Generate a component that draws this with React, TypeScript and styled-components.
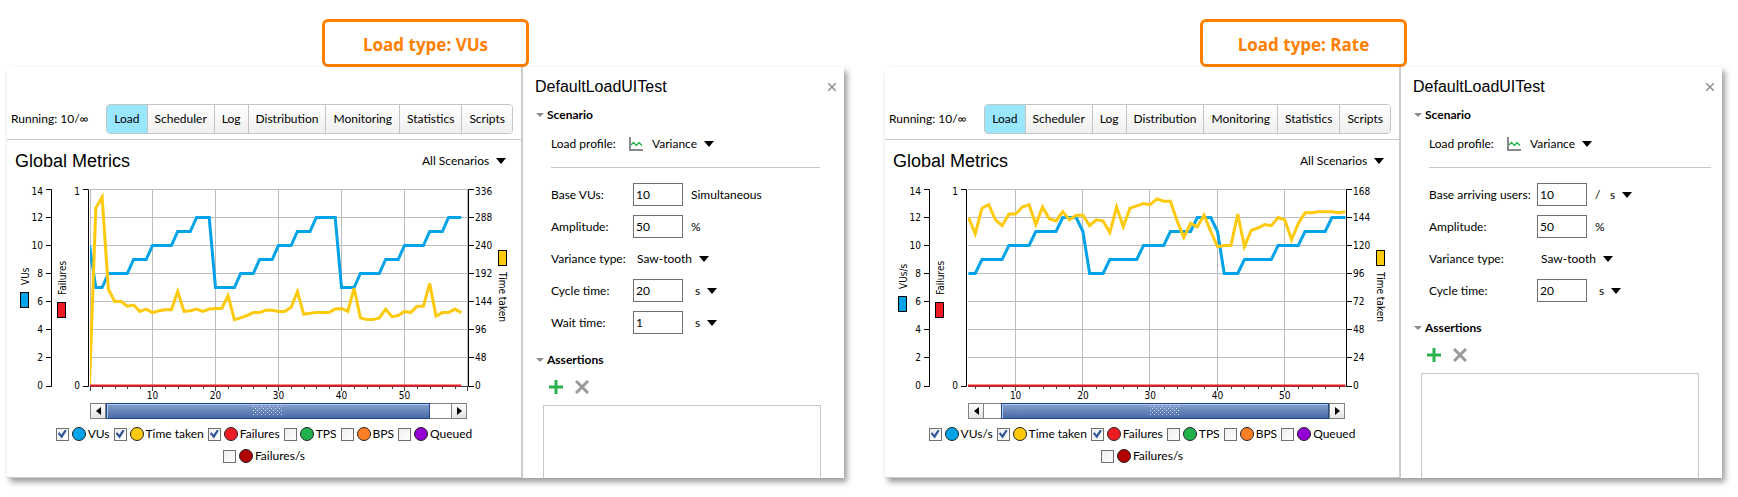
import React, { useId } from 'react';
import styled, { createGlobalStyle } from 'styled-components';

const UI_FONT = 'Lato, "Open Sans", sans-serif';
const BADGE_FONT = '"Open Sans", "Noto Sans", sans-serif';
const CHART_FONT = '"DejaVu Sans Condensed", "DejaVu Sans", sans-serif';
const TITLE_FONT = '"Liberation Sans", Arial, sans-serif';

const GlobalStyle = createGlobalStyle`
  *, *::before, *::after { box-sizing: border-box; }
  body { margin: 0; background: #fff; color: #000; font: 12px/16px ${UI_FONT}; }
  button, input, select { font: inherit; color: inherit; margin: 0; }
`;

/* ---------- page ---------- */

const Page = styled.main`
  display: grid;
  grid-template-columns: minmax(0, 1fr) minmax(0, 1fr);
  column-gap: 41px;
  padding: 19px 16px 16px 7px;
`;

const Example = styled.section`
  display: flex;
  flex-direction: column;
  align-items: center;
`;

const Badge = styled.h2`
  display: flex;
  align-items: center;
  justify-content: center;
  width: 207px;
  height: 48px;
  margin: 0;
  padding-top: 3px;
  border: 3px solid #ff8000;
  border-radius: 6px;
  background: #fff;
  color: #ff8000;
  font: 700 17px/24px ${BADGE_FONT};
`;

const Window = styled.div`
  display: grid;
  grid-template-columns: minmax(0, 1fr) 323px;
  align-self: stretch;
  background: #fff;
  box-shadow: 3px 4px 6px rgba(0, 0, 0, 0.4);
`;

/* ---------- metrics pane ---------- */

const MetricsPane = styled.div`
  display: flex;
  flex-direction: column;
  padding-bottom: 10px;
  border-bottom: 1px solid #ccc;
`;

const Toolbar = styled.header`
  display: flex;
  align-items: flex-end;
  justify-content: space-between;
  height: 73px;
  padding: 0 8px 5px 4px;
  border-bottom: 1px solid #c8c8c8;
`;

const RunState = styled.span`
  line-height: 30px;
`;

const Tabs = styled.nav`
  display: flex;
  height: 30px;
  border: 1px solid #c4c4c4;
  border-radius: 4px;
  overflow: hidden;
`;

const Tab = styled.button<{ $active?: boolean }>`
  padding: 0 7px;
  border: 0;
  border-left: 1px solid #c4c4c4;
  background: ${(p) => (p.$active ? '#99e6ff' : 'linear-gradient(#fff, #efefef)')};
  &:first-child { border-left: 0; }
`;

const TitleRow = styled.div`
  display: flex;
  align-items: center;
  justify-content: space-between;
  height: 42px;
  padding: 0 15px 0 8px;
`;

const PaneTitle = styled.h3`
  margin: 0;
  font: 400 18px/24px ${TITLE_FONT};
`;

const ChartSvg = styled.svg`
  display: block;
  width: 100%;
  height: auto;
  font: 10px ${CHART_FONT};
`;

const ScrollBar = styled.div`
  display: flex;
  height: 16px;
  margin: 1px 54px 0 83px;
  border: 1px solid #808080;
  background: #fff;
`;

const ScrollArrow = styled.button`
  display: flex;
  align-items: center;
  justify-content: center;
  flex: 0 0 14px;
  padding: 0;
  border: 0;
  background: linear-gradient(#fff, #e4e4e4);
`;

const ScrollTrack = styled.div`
  flex: 1;
  display: flex;
  margin: -1px 0;
  border: 1px solid #808080;
`;

const ScrollThumb = styled.div`
  display: flex;
  align-items: center;
  justify-content: center;
  margin: -1px;
  border: 1px solid #24468a;
  box-shadow: inset 1px 1px 0 #a9cdf5;
  background: linear-gradient(#88a0cd, #4a6ba6);
`;

const Legend = styled.div`
  display: flex;
  flex-wrap: wrap;
  justify-content: center;
  column-gap: 4px;
  margin-top: 4px;
  padding: 0 20px;
`;

const LegendItem = styled.label`
  display: flex;
  align-items: center;
  height: 22px;
`;

const CheckBox = styled.input`
  appearance: none;
  display: grid;
  place-items: center;
  width: 13px;
  height: 13px;
  margin-right: 3px;
  border: 1px solid #707070;
  background: linear-gradient(135deg, #eee, #fff);
  &:checked::after {
    content: '';
    width: 9px;
    height: 9px;
    background: #2f5496;
    clip-path: polygon(0 45%, 22% 30%, 40% 58%, 82% 0, 100% 14%, 46% 100%);
  }
`;

const Dot = styled.span<{ $color: string }>`
  width: 14px;
  height: 14px;
  margin-right: 2px;
  border: 1px solid #222;
  border-radius: 50%;
  background: ${(p) => p.$color};
`;

/* ---------- side pane ---------- */

const SidePane = styled.aside`
  display: flex;
  flex-direction: column;
  border-left: 2px solid #ccc;
`;

const SideHeader = styled.header`
  display: flex;
  align-items: center;
  justify-content: space-between;
  height: 40px;
  padding: 0 8px 0 12px;
`;

const SideTitle = styled.h3`
  margin: 0;
  font: 400 16px/24px ${TITLE_FONT};
`;

const IconButton = styled.button`
  display: flex;
  padding: 0;
  border: 0;
  background: none;
`;

const SectionToggle = styled.button`
  display: flex;
  align-items: center;
  gap: 3px;
  height: 16px;
  padding: 0;
  margin-left: 13px;
  border: 0;
  background: none;
  font-weight: 700;
`;

const ProfileRow = styled.div`
  display: flex;
  align-items: center;
  height: 20px;
  margin: 11px 0 13px 28px;
  svg { flex: none; }
`;

const ProfileLabel = styled.label`
  width: 78px;
`;

const ProfileChoice = styled.div`
  margin-left: 9px;
`;

const Divider = styled.hr<{ $wide?: boolean }>`
  width: auto;
  height: 1px;
  margin: 0 ${(p) => (p.$wide ? 11 : 24)}px 0 28px;
  border: 0;
  background: #c8c8c8;
`;

const Fields = styled.div<{ $wide?: boolean }>`
  display: grid;
  grid-template-columns: ${(p) => (p.$wide ? 108 : 82)}px 1fr;
  grid-auto-rows: 23px;
  row-gap: 9px;
  align-items: center;
  margin: 15px 0 18px 28px;
  white-space: nowrap;
`;

const FieldValue = styled.div`
  display: flex;
  align-items: center;
`;

const NumberBox = styled.input`
  width: 50px;
  height: 23px;
  margin-right: 8px;
  padding: 0 2px;
  border: 1px solid #707070;
  background: #fff;
`;

const SelectWrap = styled.span<{ $indent?: boolean }>`
  display: inline-grid;
  align-items: center;
  margin-left: ${(p) => (p.$indent ? 4 : 0)}px;
  > * { grid-area: 1 / 1; }
  svg { justify-self: end; pointer-events: none; }
`;

const Select = styled.select`
  appearance: none;
  height: 20px;
  padding: 0 16px 0 0;
  border: 0;
  background: none;
`;

const Slash = styled.span`
  width: 11px;
`;

const AssertionTools = styled.div`
  display: flex;
  gap: 12px;
  margin: 12px 0 11px 26px;
`;

const AssertionList = styled.div`
  flex: 1;
  margin: 0 23px 0 20px;
  border: 1px solid #c8c8c8;
  border-bottom: 0;
`;

/* ---------- small drawings ---------- */

const DownArrow = () => (
  <svg width="10" height="6" viewBox="0 0 10 6" aria-hidden="true">
    <path d="M0 0H10L5 6Z" />
  </svg>
);

const SectionArrow = () => (
  <svg width="8" height="4" viewBox="0 0 8 4" aria-hidden="true">
    <path d="M0 0H8L4 4Z" fill="#8c8c8c" />
  </svg>
);

const VarianceIcon = () => (
  <svg width="14" height="14" viewBox="0 0 14 14" aria-hidden="true">
    <path d="M1 0V13H14" fill="none" stroke="#8a8a8a" strokeWidth="2" />
    <path d="M2 8L4.5 5.5L7.5 8.5L10 5.5L13 8.5" fill="none" stroke="#2bb24c" strokeWidth="1.5" />
  </svg>
);

const Grip = () => (
  <svg width="30" height="10" aria-hidden="true">
    {Array.from({ length: 5 }, (_, r) =>
      Array.from({ length: 8 }, (_, c) => (
        <rect key={`${r}-${c}`} x={c * 4 + (r % 2) * 2} y={r * 2} width="1" height="1" fill="#d4e2f8" />
      )),
    )}
  </svg>
);

/* ---------- chart ---------- */

type Point = [number, number];

interface ChartData {
  loadName: string;
  start: number;
  pxPerSecond: number;
  originX: number;
  load: Point[];
  timeTaken: number[];
  timeStep: number;
  loadLabelY: number;
}

const PLOT = { left: 83, right: 460, top: 7.5, bottom: 203.5 };

function MetricsChart({ data }: { data: ChartData }) {
  const clip = useId();
  const x = (t: number) => data.originX + (t - data.start) * data.pxPerSecond;
  const y = (v: number) => PLOT.bottom - v * 14;
  const rows = [0, 2, 4, 6, 8, 10, 12, 14];
  const majors = [10, 20, 30, 40, 50];
  const minors = Array.from({ length: 31 }, (_, i) => i * 2).filter(
    (t) => t >= data.start && x(t) <= 461 && t % 10 !== 0,
  );
  const labelY = (v: number) => y(v) + (v === 14 ? 5 : 3);
  const loadPath = data.load.map(([t, v]) => `${x(t)},${y(v)}`).join(' ');
  const timePath = data.timeTaken
    .map((v, i) => `${x(data.start + i)},${y((v * 2) / data.timeStep)}`)
    .join(' ');

  return (
    <ChartSvg viewBox="0 0 514 220" role="img" aria-label="Global metrics chart">
      <clipPath id={clip}>
        <rect x={PLOT.left} y="0" width={PLOT.right - PLOT.left + 1} height="206" />
      </clipPath>

      <g stroke="#bdbdbd">
        {rows.slice(1).map((v) => <path key={v} d={`M${PLOT.left} ${y(v)}H461`} />)}
        {majors.map((t) => <path key={t} d={`M${Math.round(x(t)) - 0.5} 7V204`} />)}
        {data.start === 0 && <path d="M83.5 7V204M460.5 7V204" />}
      </g>

      <g stroke="#000" fill="none">
        <path d={`M${PLOT.left} 204.5H461`} stroke="#444" />
        <path d="M39 7.5H44.5V204.5H39M76 7.5H81.5V204.5H76" />
        <path d="M467 7.5H461.5V204.5H467" />
        {rows.slice(1, -1).map((v) => <path key={v} d={`M39 ${y(v)}H44M462 ${y(v)}H467`} />)}
        {majors.map((t) => <path key={t} d={`M${Math.round(x(t)) - 0.5} 205V209`} stroke="#444" />)}
        {minors.map((t) => <path key={t} d={`M${Math.round(x(t)) + 0.5} 205V207`} stroke="#444" />)}
        {data.start === 0 && <path d="M83.5 205V209M460.5 205V209" stroke="#444" />}
      </g>

      <g clipPath={`url(#${clip})`} fill="none" strokeWidth="3">
        <polyline points={loadPath} stroke="#00a2e8" />
        <polyline points={timePath} stroke="#ffc90e" />
        <path d={`M83 203.5H${x(59)}`} stroke="#ed1c24" strokeWidth="2" />
      </g>

      <g textAnchor="end">
        {rows.map((v) => <text key={v} x="36" y={labelY(v)}>{v}</text>)}
        <text x="73" y={labelY(14)}>1</text>
        <text x="73" y={labelY(0)}>0</text>
      </g>
      <g>
        {rows.map((v) => (
          <text key={v} x="468" y={labelY(v)}>{(v / 2) * data.timeStep}</text>
        ))}
      </g>
      <g textAnchor="middle">
        {majors.map((t) => <text key={t} x={x(t)} y="217">{t}</text>)}
      </g>

      <g stroke="#000">
        <rect x="13.5" y={data.loadLabelY + 7.5} width="8" height="15" fill="#00a2e8" />
        <rect x="50.5" y="120.5" width="8" height="15" fill="#ed1c24" />
        <rect x="491.5" y="68.5" width="8" height="15" fill="#ffc90e" />
      </g>
      <g>
        <text transform={`translate(22 ${data.loadLabelY}) rotate(-90)`}>{data.loadName}</text>
        <text transform="translate(59 113) rotate(-90)">Failures</text>
        <text transform="translate(492 90) rotate(90)">Time taken</text>
      </g>
    </ChartSvg>
  );
}

/* ---------- composed parts ---------- */

function Choice({ label, id, value, indent }: { label?: string; id?: string; value: string; indent?: boolean }) {
  return (
    <SelectWrap $indent={indent}>
      <Select id={id} aria-label={label} defaultValue={value}>
        <option>{value}</option>
      </Select>
      <DownArrow />
    </SelectWrap>
  );
}

interface Field {
  label: string;
  value?: string;
  choice?: string;
  suffix?: string;
  perUnit?: boolean;
  unit?: string;
}

function FieldRow({ field }: { field: Field }) {
  const id = useId();
  return (
    <>
      <label htmlFor={id}>{field.label}</label>
      <FieldValue>
        {field.value && <NumberBox id={id} defaultValue={field.value} />}
        {field.choice && <Choice id={id} value={field.choice} indent />}
        {field.suffix && <span>{field.suffix}</span>}
        {field.perUnit && <Slash>/</Slash>}
        {field.unit && <Choice label={`${field.label} unit`} value={field.unit} indent />}
      </FieldValue>
    </>
  );
}

const TABS = ['Load', 'Scheduler', 'Log', 'Distribution', 'Monitoring', 'Statistics', 'Scripts'];

interface PanelProps {
  badge: string;
  chart: ChartData;
  thumb: [number, number];
  fields: Field[];
  wide?: boolean;
}

function LoadTestWindow({ badge, chart, thumb, fields, wide }: PanelProps) {
  const profileId = useId();
  const series: [string, string, boolean][] = [
    [chart.loadName, '#00a2e8', true],
    ['Time taken', '#ffc90e', true],
    ['Failures', '#ed1c24', true],
    ['TPS', '#22b14c', false],
    ['BPS', '#ff7f27', false],
    ['Queued', '#9400d3', false],
    ['Failures/s', '#b00000', false],
  ];

  return (
    <Example>
      <Badge>{badge}</Badge>
      <Window>
        <MetricsPane>
          <Toolbar>
            <RunState>Running: 10/∞</RunState>
            <Tabs>
              {TABS.map((t) => <Tab key={t} type="button" $active={t === 'Load'}>{t}</Tab>)}
            </Tabs>
          </Toolbar>
          <TitleRow>
            <PaneTitle>Global Metrics</PaneTitle>
            <Choice label="Scenario filter" value="All Scenarios" />
          </TitleRow>
          <MetricsChart data={chart} />
          <ScrollBar>
            <ScrollArrow type="button" aria-label="Scroll left">
              <svg width="5" height="8"><path d="M5 0V8L0 4Z" /></svg>
            </ScrollArrow>
            <ScrollTrack>
              <ScrollThumb style={{ marginLeft: `${thumb[0]}%`, width: `${thumb[1]}%` }}>
                <Grip />
              </ScrollThumb>
            </ScrollTrack>
            <ScrollArrow type="button" aria-label="Scroll right">
              <svg width="5" height="8"><path d="M0 0V8L5 4Z" /></svg>
            </ScrollArrow>
          </ScrollBar>
          <Legend>
            {series.map(([name, color, on]) => (
              <LegendItem key={name}>
                <CheckBox type="checkbox" defaultChecked={on} />
                <Dot $color={color} />
                {name}
              </LegendItem>
            ))}
          </Legend>
        </MetricsPane>

        <SidePane>
          <SideHeader>
            <SideTitle>DefaultLoadUITest</SideTitle>
            <IconButton type="button" aria-label="Close">
              <svg width="8" height="8" stroke="#8a8a8a" strokeWidth="1.4"><path d="M0 0L8 8M8 0L0 8" /></svg>
            </IconButton>
          </SideHeader>
          <SectionToggle type="button"><SectionArrow />Scenario</SectionToggle>
          <ProfileRow>
            <ProfileLabel htmlFor={profileId}>Load profile:</ProfileLabel>
            <VarianceIcon />
            <ProfileChoice><Choice id={profileId} value="Variance" /></ProfileChoice>
          </ProfileRow>
          <Divider $wide={wide} />
          <Fields $wide={wide}>
            {fields.map((f) => <FieldRow key={f.label} field={f} />)}
          </Fields>
          <SectionToggle type="button"><SectionArrow />Assertions</SectionToggle>
          <AssertionTools>
            <IconButton type="button" aria-label="Add assertion">
              <svg width="14" height="14" stroke="#2bb24c" strokeWidth="3"><path d="M7 0V14M0 7H14" /></svg>
            </IconButton>
            <IconButton type="button" aria-label="Remove assertion">
              <svg width="14" height="14" stroke="#9a9a9a" strokeWidth="3"><path d="M1 1L13 13M13 1L1 13" /></svg>
            </IconButton>
          </AssertionTools>
          <AssertionList />
        </SidePane>
      </Window>
    </Example>
  );
}

/* ---------- data ---------- */

const vusChart: ChartData = {
  loadName: 'VUs',
  start: 0,
  pxPerSecond: 6.3,
  originX: 82.5,
  timeStep: 48,
  loadLabelY: 103,
  load: [
    [0, 10], [1, 7], [2, 7], [3, 8], [6, 8], [7, 9], [9, 9], [10, 10], [13, 10], [14, 11], [16, 11],
    [17, 12], [19, 12], [20, 7], [23, 7], [24, 8], [26, 8], [27, 9], [29, 9], [30, 10], [32, 10],
    [33, 11], [35, 11], [36, 12], [39, 12], [40, 7], [42, 7], [43, 8], [46, 8], [47, 9], [49, 9],
    [50, 10], [53, 10], [54, 11], [56, 11], [57, 12], [59, 12],
  ],
  timeTaken: [
    0, 304, 323, 165, 144, 144, 136, 138, 127, 131, 125, 128, 130, 130, 161, 127, 128, 131, 127, 131,
    132, 132, 154, 113, 116, 120, 125, 125, 129, 129, 127, 127, 134, 161, 122, 124, 125, 125, 125, 131,
    132, 127, 167, 116, 113, 113, 116, 131, 118, 120, 127, 125, 136, 136, 175, 119, 125, 125, 131, 125,
  ],
};

const rateChart: ChartData = {
  loadName: 'VUs/s',
  start: 3,
  pxPerSecond: 6.73,
  originX: 83.5,
  timeStep: 24,
  loadLabelY: 107,
  load: [
    [3, 8], [4, 8], [5, 9], [8, 9], [9, 10], [12, 10], [13, 11], [16, 11], [17, 12], [19, 12], [20, 11],
    [21, 8], [23, 8], [24, 9], [28, 9], [29, 10], [32, 10], [33, 11], [36, 11], [37, 12], [39, 12],
    [40, 11], [41, 8], [43, 8], [44, 9], [48, 9], [49, 10], [52, 10], [53, 11], [56, 11], [57, 12], [59, 12],
  ],
  timeTaken: [
    144, 130, 152, 155, 142, 137, 147, 147, 153, 155, 138, 153, 143, 141, 149, 142, 146, 146, 137, 142,
    141, 131, 153, 136, 152, 154, 156, 155, 160, 158, 158, 141, 127, 139, 136, 146, 132, 119, 120, 120,
    147, 119, 133, 135, 138, 137, 144, 142, 125, 139, 148, 148, 149, 149, 149, 148, 149,
  ],
};

const vusFields: Field[] = [
  { label: 'Base VUs:', value: '10', suffix: 'Simultaneous' },
  { label: 'Amplitude:', value: '50', suffix: '%' },
  { label: 'Variance type:', choice: 'Saw-tooth' },
  { label: 'Cycle time:', value: '20', unit: 's' },
  { label: 'Wait time:', value: '1', unit: 's' },
];

const rateFields: Field[] = [
  { label: 'Base arriving users:', value: '10', perUnit: true, unit: 's' },
  { label: 'Amplitude:', value: '50', suffix: '%' },
  { label: 'Variance type:', choice: 'Saw-tooth' },
  { label: 'Cycle time:', value: '20', unit: 's' },
];

export default function App() {
  return (
    <>
      <GlobalStyle />
      <Page>
        <LoadTestWindow badge="Load type: VUs" chart={vusChart} thumb={[0, 94]} fields={vusFields} />
        <LoadTestWindow badge="Load type: Rate" chart={rateChart} thumb={[5, 95]} fields={rateFields} wide />
      </Page>
    </>
  );
}
